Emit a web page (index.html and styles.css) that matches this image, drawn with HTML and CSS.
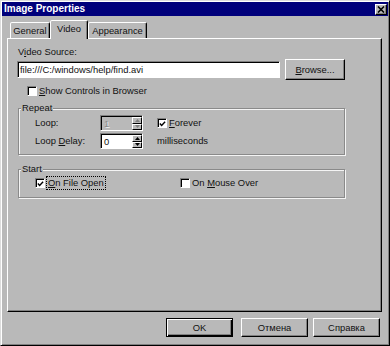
FILE: index.html
```html
<!DOCTYPE html>
<html>
<head>
<meta charset="utf-8">
<link rel="stylesheet" href="styles.css">
</head>
<body>
<div class="window">
  <div class="titlebar">
    <span class="title">Image Properties</span>
    <span class="close"><svg width="8" height="7" viewBox="0 0 8 7"><path d="M1 0.5 L7 6.5 M7 0.5 L1 6.5" stroke="#000" stroke-width="1.6" fill="none"/></svg></span>
  </div>
  <div class="content">
    <div class="tabs">
      <div class="tab tab-general">General</div>
      <div class="tab tab-video active">Video</div>
      <div class="tab tab-appearance">Appearance</div>
    </div>
    <div class="panel">
      <div class="label">V<u>i</u>deo Source:</div>
      <div class="source-row">
        <div class="input">file:///C:/windows/help/find.avi</div>
        <div class="btn browse"><u>B</u>rowse...</div>
      </div>
      <div class="check-row show-controls">
        <span class="box"></span>
        <span class="check-text"><u>S</u>how Controls in Browser</span>
      </div>
      <fieldset class="group repeat">
        <legend>Repeat</legend>
        <div class="repeat-grid">
          <span class="field-label">Loop:</span>
          <div class="spin disabled"><span class="val">1</span><span class="arrows"><span class="arr"><svg width="5" height="3" viewBox="0 0 5 3"><path d="M0 3 L2.5 0 L5 3Z" fill="#808080"/></svg></span><span class="arr"><svg width="5" height="3" viewBox="0 0 5 3"><path d="M0 0 L2.5 3 L5 0Z" fill="#808080"/></svg></span></span></div>
          <div class="check-row third">
            <span class="box"><svg width="8" height="8" viewBox="0 0 8 8"><path d="M1 3.5 L3 5.8 L7 1.5" stroke="#000" stroke-width="1.6" fill="none"/></svg></span>
            <span class="check-text"><u>F</u>orever</span>
          </div>
          <span class="field-label">Loop <u>D</u>elay:</span>
          <div class="spin"><span class="val">0</span><span class="arrows"><span class="arr"><svg width="5" height="3" viewBox="0 0 5 3"><path d="M0 3 L2.5 0 L5 3Z" fill="#000"/></svg></span><span class="arr"><svg width="5" height="3" viewBox="0 0 5 3"><path d="M0 0 L2.5 3 L5 0Z" fill="#000"/></svg></span></span></div>
          <span class="field-label third">milliseconds</span>
        </div>
      </fieldset>
      <fieldset class="group start">
        <legend>Start</legend>
        <div class="start-row">
          <div class="check-row first">
            <span class="box"><svg width="8" height="8" viewBox="0 0 8 8"><path d="M1 3.5 L3 5.8 L7 1.5" stroke="#000" stroke-width="1.6" fill="none"/></svg></span>
            <span class="check-text focus"><u>O</u>n File Open</span>
          </div>
          <div class="check-row">
            <span class="box"></span>
            <span class="check-text">On <u>M</u>ouse Over</span>
          </div>
        </div>
      </fieldset>
    </div>
    <div class="footer">
      <div class="btn default ok">OK</div>
      <div class="btn cancel">Отмена</div>
      <div class="btn help">Справка</div>
    </div>
  </div>
</div>
</body>
</html>
```
FILE: styles.css
```css
* { box-sizing: border-box; }
body {
  margin: 0;
  background: #b9b9b9;
  font-family: "Liberation Sans", Arial, sans-serif;
  font-size: 9.4px;
  color: #111;
}
.window {
  width: 390px;
  height: 346px;
  background: #b9b9b9;
  border: 1px solid;
  border-color: #dcdcdc #000 #000 #dcdcdc;
  box-shadow: inset 1px 1px #fff, inset -1px -1px #808080;
  padding: 1px;
}
.titlebar {
  height: 14px;
  background: #00007b;
  display: flex;
  align-items: center;
  justify-content: space-between;
  padding: 0 1px 0 2px;
}
.title {
  color: #fff;
  font-weight: bold;
  font-size: 10px;
  line-height: 12px;
}
.close {
  width: 12px;
  height: 11px;
  background: #b9b9b9;
  border: 1px solid;
  border-color: #fff #000 #000 #fff;
  box-shadow: inset -1px -1px #808080;
  display: flex;
  align-items: center;
  justify-content: center;
}
.content {
  padding: 4px 6px 0 5px;
}
.tabs {
  display: flex;
  align-items: flex-end;
  height: 18px;
  padding-left: 3px;
}
.tab {
  height: 16px;
  border: 1px solid;
  border-bottom: none;
  border-color: #fff #000 transparent #fff;
  box-shadow: inset -1px 0 #808080;
  border-radius: 2px 2px 0 0;
  display: flex;
  align-items: center;
  justify-content: center;
  line-height: 12px;
  background: #b9b9b9;
}
.tab-general { width: 40px; }
.tab-video { width: 38px; }
.tab-appearance { width: 59px; }
.tab.active {
  height: 19px;
  margin-bottom: -1px;
  position: relative;
  z-index: 1;
  padding-bottom: 3px;
}
.panel {
  height: 274px;
  border: 1px solid;
  border-color: #fff #000 #000 #fff;
  box-shadow: inset -1px -1px #808080;
  padding: 6px 36px 0 10px;
}
.label {
  line-height: 13px;
  height: 13px;
}
.source-row {
  margin-top: 1px;
  height: 21px;
  display: flex;
  align-items: center;
  gap: 5px;
}
.input {
  flex: 1;
  height: 17px;
  margin-left: -1px;
  background: #fff;
  border: 1px solid;
  border-color: #808080 #fff #fff #808080;
  box-shadow: inset 1px 1px #000;
  padding: 0 0 0 2px;
  line-height: 15px;
  white-space: nowrap;
}
.btn {
  height: 21px;
  background: #b9b9b9;
  border: 1px solid;
  border-color: #fff #000 #000 #fff;
  box-shadow: inset -1px -1px #808080;
  display: flex;
  align-items: center;
  justify-content: center;
  line-height: 12px;
}
.browse { width: 60px; }
.check-row {
  display: flex;
  align-items: center;
  height: 12px;
}
.show-controls {
  margin-top: 5px;
  padding-left: 9px;
}
.box {
  width: 10px;
  height: 10px;
  flex: none;
  background: #fff;
  border: 1px solid;
  border-color: #808080 #fff #fff #808080;
  box-shadow: inset 1px 1px #000;
  display: flex;
  align-items: center;
  justify-content: center;
  margin-right: 2px;
}
.box svg { margin: 1px 0 0 1px; }
.check-text {
  line-height: 12px;
  white-space: nowrap;
}
.group {
  margin: 5px 0 0 0;
  padding: 0;
  border: 1px solid #8a8a8a;
  box-shadow: 1px 1px 0 #f4f4f4, inset 1px 1px 0 #f4f4f4;
  min-width: 0;
}
.group legend {
  padding: 0 1px;
  margin-left: 2px;
  line-height: 12px;
  background: #b9b9b9;
}
.repeat-grid {
  display: grid;
  grid-template-columns: 65px 43px auto;
  grid-auto-rows: 16px;
  row-gap: 2px;
  align-items: center;
  padding: 1px 0 5px 16px;
}
.third { margin-left: 14px; }
.field-label { line-height: 12px; }
.spin {
  height: 16px;
  display: flex;
  background: #fff;
  border: 1px solid;
  border-color: #808080 #fff #fff #808080;
  box-shadow: inset 1px 1px #000;
  padding: 1px 0 0 1px;
}
.spin .val {
  flex: 1;
  padding-left: 2px;
  line-height: 13px;
}
.spin.disabled { background: #b9b9b9; }
.spin.disabled .val { color: #8a8a8a; text-shadow: 1px 1px #eee; }
.arrows {
  width: 10px;
  display: flex;
  flex-direction: column;
}
.arr {
  flex: 1;
  background: #b9b9b9;
  border: 1px solid;
  border-color: #fff #000 #000 #fff;
  display: flex;
  align-items: center;
  justify-content: center;
}
.start {
  margin-top: 8px;
}
.start-row {
  display: flex;
  padding: 2px 0 8px 16px;
}
.start-row .first { width: 145px; }
.focus {
  outline: 1px dotted #000;
  outline-offset: 0;
  padding: 0 1px;
}
.footer {
  margin-top: 6px;
  display: flex;
  justify-content: flex-end;
  padding-right: 2px;
}
.footer .btn {
  width: 67px;
  height: 19px;
}
.ok { margin-right: 8px; }
.cancel { margin-right: 5px; }
.btn.default {
  border-color: #000;
  box-shadow: inset 1px 1px #fff, inset -1px -1px #000, inset -2px -2px #808080;
}
```
